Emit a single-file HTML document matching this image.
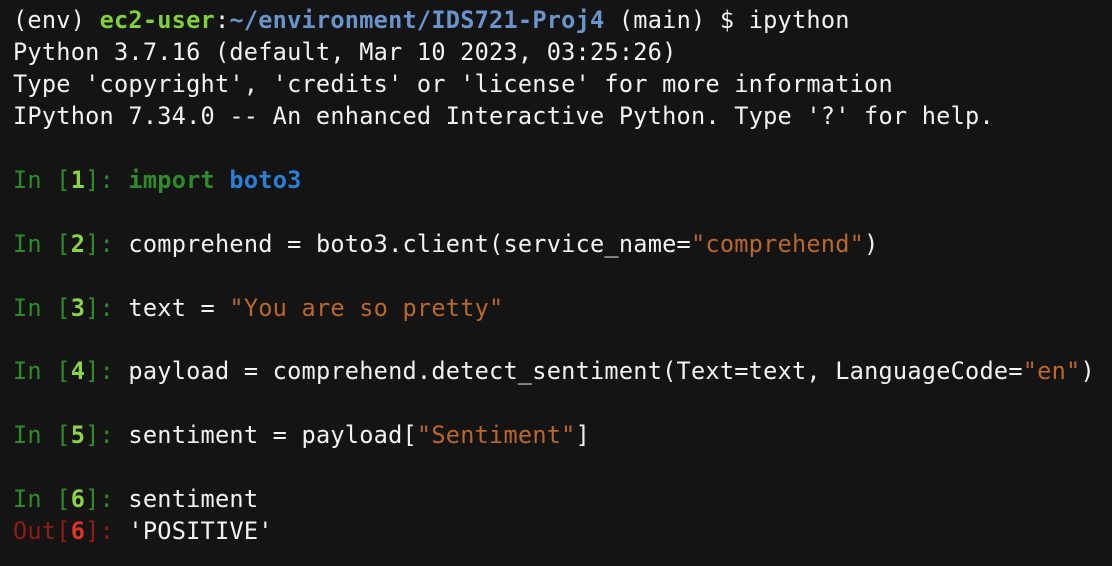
<!DOCTYPE html>
<html><head><meta charset="utf-8"><style>
html,body{margin:0;padding:0;background:#141414;width:1112px;height:566px;overflow:hidden}
pre{margin:0;position:absolute;left:13px;top:5px;font-family:"DejaVu Sans Mono","Liberation Mono",monospace;font-size:23.6px;line-height:31.95px;letter-spacing:0.22px;color:#f2f2f2}
.g{color:#7fd13b;font-weight:bold}.p{color:#6a95cc;font-weight:bold}
.dg{color:#2f8a2a}.bg{color:#8ad446;font-weight:bold}.kw{color:#2f8a2a;font-weight:bold}
.b{color:#2a80d6;font-weight:bold}.s{color:#b9672a}
.dr{color:#8e1d16}.br{color:#e0342a;font-weight:bold}
</style></head><body>
<pre>(env) <span class="g">ec2-user</span>:<span class="p">~/environment/IDS721-Proj4</span> (main) $ ipython
Python 3.7.16 (default, Mar 10 2023, 03:25:26)
Type 'copyright', 'credits' or 'license' for more information
IPython 7.34.0 -- An enhanced Interactive Python. Type '?' for help.

<span class="dg">In [</span><span class="bg">1</span><span class="dg">]: </span><span class="kw">import</span> <span class="b">boto3</span>

<span class="dg">In [</span><span class="bg">2</span><span class="dg">]: </span>comprehend = boto3.client(service_name=<span class="s">"comprehend"</span>)

<span class="dg">In [</span><span class="bg">3</span><span class="dg">]: </span>text = <span class="s">"You are so pretty"</span>

<span class="dg">In [</span><span class="bg">4</span><span class="dg">]: </span>payload = comprehend.detect_sentiment(Text=text, LanguageCode=<span class="s">"en"</span>)

<span class="dg">In [</span><span class="bg">5</span><span class="dg">]: </span>sentiment = payload[<span class="s">"Sentiment"</span>]

<span class="dg">In [</span><span class="bg">6</span><span class="dg">]: </span>sentiment
<span class="dr">Out[</span><span class="br">6</span><span class="dr">]: </span>'POSITIVE'
</pre>
</body></html>
